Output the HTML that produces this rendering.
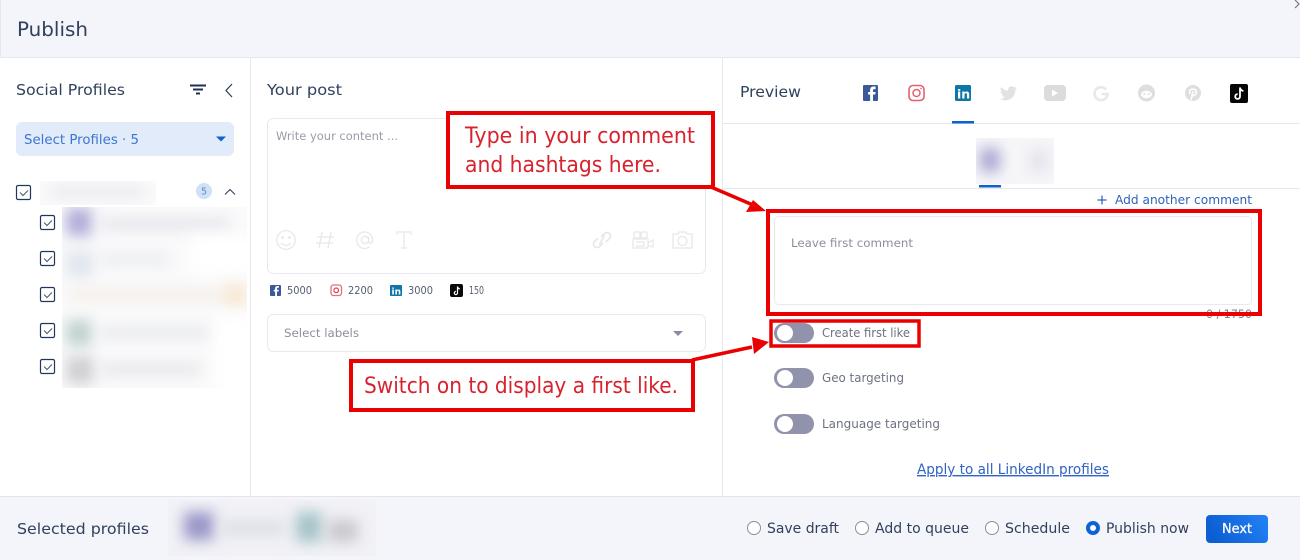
<!DOCTYPE html>
<html><head><meta charset="utf-8"><title>Publish</title>
<style>
html,body{margin:0;padding:0;background:#fff;width:1300px;height:560px;overflow:hidden}
svg{display:block}
text{font-family:"DejaVu Sans","Liberation Sans",sans-serif;fill:#31415c}
.r{font-family:"DejaVu Sans","Liberation Sans",sans-serif;fill:#d8232e;font-size:22px}
.g{fill:none;stroke:#e6e7eb;stroke-width:1.2}
</style></head><body>
<svg width="1300" height="560" viewBox="0 0 1300 560" xmlns="http://www.w3.org/2000/svg">
<defs>
<filter id="b" x="-150%" y="-150%" width="400%" height="400%"><feGaussianBlur stdDeviation="7"/></filter>
<clipPath id="c1"><rect x="62" y="207" width="185" height="181"/></clipPath>
<clipPath id="c2"><rect x="40" y="181" width="116" height="24"/></clipPath>
<clipPath id="c3"><rect x="976" y="138" width="78" height="46"/></clipPath>
<clipPath id="c4"><rect x="168" y="500" width="208" height="56"/></clipPath>
<linearGradient id="nx" x1="0" x2="1" y1="0.3" y2="0"><stop offset="0" stop-color="#0c5fd2"/><stop offset="1" stop-color="#2482f7"/></linearGradient>
</defs>
<rect width="1300" height="560" fill="#fff"/>
<!-- header -->
<rect width="1300" height="57" fill="#f4f5fa"/>
<rect y="57" width="1300" height="1" fill="#e6e7ee"/>
<rect width="1" height="57" fill="#e6e7ee"/>
<text x="17" y="36" font-size="19.500" textLength="71" lengthAdjust="spacingAndGlyphs">Publish</text>
<path d="M1295 0l4 4-4 4" fill="none" stroke="#777" stroke-width="1.2"/>
<!-- columns -->
<rect x="250" y="58" width="1" height="438" fill="#e9eaf0"/>
<rect x="722" y="58" width="1" height="438" fill="#e9eaf0"/>
<rect x="723" y="123" width="577" height="1" fill="#e6e7ee"/>
<rect x="723" y="188" width="577" height="1" fill="#e6e7ee"/>
<!-- sidebar -->
<text x="16" y="95" font-size="15.500" textLength="109" lengthAdjust="spacingAndGlyphs">Social Profiles</text>
<path d="M190 85.500h16M193 89.500h10M196 93.500h4" stroke="#1f3050" stroke-width="2" fill="none"/>
<path d="M232 84l-6 6.500 6 6.500" stroke="#2a3a55" stroke-width="1.2" fill="none"/>
<rect x="16" y="122" width="218" height="34" rx="6" fill="#e1ebf9"/>
<text x="24" y="144" font-size="13.500" textLength="115" lengthAdjust="spacingAndGlyphs" style="fill:#3a76d2">Select Profiles · 5</text>
<path d="M216 136.500h10l-5 5z" fill="#0d62d6"/>
<g clip-path="url(#c2)"><rect x="40" y="181" width="116" height="24" fill="#fafafb"/><rect x="50" y="186" width="95" height="12" fill="#e9eaed" filter="url(#b)"/></g>
<g clip-path="url(#c1)">
<rect x="62" y="207" width="185" height="181" fill="#fafafb"/>
<rect x="66" y="208" width="26" height="28" fill="#b0aed8" filter="url(#b)"/>
<rect x="100" y="217" width="130" height="14" fill="#e8e8ee" filter="url(#b)"/>
<rect x="66" y="250" width="28" height="28" fill="#e2e6ee" filter="url(#b)"/>
<rect x="100" y="252" width="70" height="14" fill="#eceef2" filter="url(#b)"/>
<rect x="190" y="235" width="70" height="40" fill="#fff" filter="url(#b)"/>
<rect x="70" y="288" width="170" height="14" fill="#f5f0ea" filter="url(#b)"/>
<rect x="226" y="284" width="20" height="22" fill="#fbe8d2" filter="url(#b)"/>
<rect x="66" y="320" width="26" height="26" fill="#c0d2cf" filter="url(#b)"/>
<rect x="100" y="326" width="110" height="14" fill="#eaebee" filter="url(#b)"/>
<rect x="215" y="315" width="40" height="80" fill="#fff" filter="url(#b)"/>
<rect x="66" y="356" width="28" height="28" fill="#d0d0d3" filter="url(#b)"/>
<rect x="100" y="362" width="100" height="14" fill="#e9e9ec" filter="url(#b)"/>
</g>
<g fill="#fff" stroke="#21375a" stroke-width="1.2">
<rect x="16.500" y="185.500" width="14" height="14" rx="1.500"/>
<rect x="40.500" y="215.500" width="14" height="14" rx="1.500"/>
<rect x="40.500" y="251.500" width="14" height="14" rx="1.500"/>
<rect x="40.500" y="287.500" width="14" height="14" rx="1.500"/>
<rect x="40.500" y="323.500" width="14" height="14" rx="1.500"/>
<rect x="40.500" y="359.500" width="14" height="14" rx="1.500"/>
</g>
<g fill="none" stroke="#5a6478" stroke-width="1.200">
<path d="M20 192.500l3 3 5-5"/><path d="M44 222.500l3 3 5-5"/><path d="M44 258.500l3 3 5-5"/><path d="M44 294.500l3 3 5-5"/><path d="M44 330.500l3 3 5-5"/><path d="M44 366.500l3 3 5-5"/>
</g>
<circle cx="204" cy="191" r="8" fill="#cfe0f7"/>
<text x="204" y="194.500" font-size="9.500" text-anchor="middle" style="fill:#5f8bd2">5</text>
<path d="M225 194.500l5-5 5 5" fill="none" stroke="#2a3a55" stroke-width="1"/>
<!-- your post -->
<text x="267" y="95" font-size="15.500" textLength="75" lengthAdjust="spacingAndGlyphs">Your post</text>
<rect x="267.500" y="118.500" width="438" height="155" rx="6" fill="#fff" stroke="#e8e9ef"/>
<text x="276" y="140" font-size="11.500" textLength="122" lengthAdjust="spacingAndGlyphs" style="fill:#9a9ca6">Write your content ...</text>
<g class="g">
<circle cx="286" cy="240" r="9.300"/><circle cx="282.500" cy="237.500" r=".8"/><circle cx="289.500" cy="237.500" r=".8"/><path d="M281 243c2.500 3 7.500 3 10 0"/>
<path d="M322 232l-3 16M331 232l-3 16M317 237h17M316 243h17"/>
<circle cx="365" cy="240" r="3.600"/><path d="M368.600 236.500v5c0 2.500 4 2.500 4-1 0-5-3.500-8.500-8-8.500s-8 3.600-8 8.300 3.600 8.200 8 8.200c2 0 3.500-.5 5-1.500"/>
<path d="M397 235v-3h14v3M404 232v16M401 248h6"/>
<path d="M598 238l-3.500 3.500a3.500 3.500 0 0 0 5 5l3.500-3.500M606 242l3.500-3.500a3.500 3.500 0 0 0-5-5L601 237M599.500 244.500l5-9" stroke-width="1.600"/>
<rect x="633" y="239" width="15" height="9"/><rect x="634" y="232" width="6" height="6" rx="1"/><rect x="641" y="232" width="6" height="6" rx="1"/><path d="M648 243l5-3v7l-5-2M636 242h8v4h-8"/>
<path d="M673 234h5l1-2h7l1 2h5v14h-19z"/><circle cx="682.500" cy="241" r="4.500"/>
</g>
<!-- counters -->
<rect x="270" y="285" width="11" height="11" rx="1" fill="#3b5998"/><path d="M277 296v-4.500h1.500l.3-1.800h-1.800v-1c0-.6.300-.9 1-.9h.9V286h-1.500c-1.500 0-2.300.9-2.300 2.300v1.400h-1.300v1.800h1.300V296z" fill="#fff"/>
<text x="287" y="294" font-size="10.500" textLength="25" lengthAdjust="spacingAndGlyphs" style="fill:#555e70">5000</text>
<rect x="331" y="285" width="10.500" height="10.500" rx="2.500" fill="none" stroke="#e2707e" stroke-width="1.300"/><circle cx="336.200" cy="290.300" r="2.300" fill="none" stroke="#d8404f" stroke-width="1.200"/>
<text x="348" y="294" font-size="10.500" textLength="25" lengthAdjust="spacingAndGlyphs" style="fill:#555e70">2200</text>
<rect x="390" y="285" width="12" height="11" rx="1" fill="#0e76a8"/><text x="391.500" y="294.500" font-size="9" font-weight="bold" style="fill:#fff">in</text>
<text x="408" y="294" font-size="10.500" textLength="25" lengthAdjust="spacingAndGlyphs" style="fill:#555e70">3000</text>
<rect x="450" y="284" width="13" height="13" rx="2" fill="#0a0a0a"/><path d="M457.500 286.500v6.500a1.600 1.600 0 1 1-1.600-1.600M457.500 286.500c.2 1.500 1 2.200 2.300 2.400" fill="none" stroke="#fff" stroke-width="1.200"/>
<text x="469" y="294" font-size="10.500" textLength="15" lengthAdjust="spacingAndGlyphs" style="fill:#555e70">150</text>
<!-- labels -->
<rect x="267.500" y="314.500" width="438" height="37" rx="6" fill="#fff" stroke="#e8e9ef"/>
<text x="284" y="337" font-size="11.500" textLength="75" lengthAdjust="spacingAndGlyphs" style="fill:#8d8f9b">Select labels</text>
<path d="M673 331h10l-5 5z" fill="#8a8ba3"/>
<!-- preview -->
<text x="740" y="97" font-size="15" textLength="61" lengthAdjust="spacingAndGlyphs">Preview</text>
<rect x="863" y="85" width="15" height="16" rx="1" fill="#3b5998"/><path d="M873 101v-6.500h2.200l.4-2.500H873v-1.600c0-.8.300-1.300 1.300-1.300h1.300V86.500h-2c-2.200 0-3.500 1.300-3.500 3.400V92h-2v2.500h2v6.500z" fill="#fff"/>
<rect x="909" y="85.500" width="15" height="15" rx="4" fill="none" stroke="#e5606e" stroke-width="1.600"/><circle cx="916.500" cy="93" r="3.500" fill="none" stroke="#e5606e" stroke-width="1.500"/><circle cx="921" cy="88.500" r=".8" fill="#e5606e"/>
<rect x="955" y="85" width="16" height="16" rx="1.500" fill="#0e76a8"/><text x="957" y="98.500" font-size="12.500" font-weight="bold" style="fill:#fff">in</text>
<rect x="952" y="121" width="22" height="2.500" fill="#0d62d0"/>
<path d="M1017 88c-.7.300-1.300.5-2 .6.700-.5 1.300-1.100 1.500-1.900-.7.400-1.400.7-2.200.8a3.500 3.500 0 0 0-6 3.200c-3-.1-5.500-1.500-7.200-3.700-.9 1.600-.5 3.700 1.100 4.700-.6 0-1.100-.2-1.600-.4 0 1.700 1.200 3.100 2.800 3.500-.5.100-1 .2-1.600.1.500 1.400 1.800 2.400 3.300 2.400-1.500 1.200-3.400 1.700-5.200 1.500 1.600 1 3.400 1.600 5.400 1.600 6.500 0 10.200-5.500 10-10.400.7-.5 1.300-1.200 1.700-2z" fill="#e2e2e2"/>
<rect x="1044" y="85" width="22" height="16" rx="4" fill="#dcdcdc"/><path d="M1052 89.500v7l6-3.500z" fill="#fff"/>
<path d="M1106 89.500a6.500 6.500 0 1 0 1.500 4.500h-6" fill="none" stroke="#e8e8e8" stroke-width="2.600"/>
<circle cx="1146.500" cy="93" r="8.500" fill="#dedede"/><ellipse cx="1146.500" cy="94.500" rx="5.500" ry="3.800" fill="#fff"/><circle cx="1144.300" cy="94" r="1" fill="#dedede"/><circle cx="1148.700" cy="94" r="1" fill="#dedede"/>
<circle cx="1193" cy="93" r="8" fill="#dedede"/><path d="M1191 100l2-9M1190 94c-1.500-3 .5-5 3-5s4 2 3 4.500-3.500 2.500-4 1" fill="none" stroke="#fff" stroke-width="1.600"/>
<rect x="1230" y="84" width="18" height="19" rx="2" fill="#050505"/><path d="M1240 87.500v9a2.400 2.400 0 1 1-2.400-2.400M1240 87.500c.3 2 1.500 3.200 3.400 3.500" fill="none" stroke="#fff" stroke-width="1.800"/>
<!-- thumb -->
<g clip-path="url(#c3)">
<rect x="976" y="138" width="78" height="46" fill="#f6f6f9"/>
<rect x="980" y="148" width="20" height="24" fill="#a9a7d2" filter="url(#b)"/>
<rect x="1030" y="150" width="18" height="22" fill="#e2e2ea" filter="url(#b)"/>
</g>
<rect x="979" y="185" width="22" height="2.500" fill="#0d62d0"/>
<!-- add comment -->
<path d="M1102 195.500v9M1097.500 200h9" stroke="#2a62b8" stroke-width="1.200"/>
<text x="1115" y="204" font-size="12" textLength="137" lengthAdjust="spacingAndGlyphs" style="fill:#2e63b8">Add another comment</text>
<rect x="774.500" y="216.500" width="477" height="88" rx="4" fill="#fff" stroke="#e8e9f0"/>
<text x="791" y="247" font-size="11.500" textLength="122" lengthAdjust="spacingAndGlyphs" style="fill:#8d8f9b">Leave first comment</text>
<text x="1206" y="318" font-size="11.500" textLength="46" lengthAdjust="spacingAndGlyphs" style="fill:#7d808c">0 / 1750</text>
<!-- toggles -->
<g fill="#9192ac"><rect x="774" y="323" width="40" height="20" rx="10"/><rect x="774" y="368" width="40" height="20" rx="10"/><rect x="774" y="414" width="40" height="20" rx="10"/></g>
<g fill="#fff"><circle cx="785" cy="333" r="8"/><circle cx="785" cy="378" r="8"/><circle cx="785" cy="424" r="8"/></g>
<text x="822" y="337" font-size="12" textLength="88" lengthAdjust="spacingAndGlyphs" style="fill:#6d7282">Create first like</text>
<text x="822" y="382" font-size="12" textLength="82" lengthAdjust="spacingAndGlyphs" style="fill:#6d7282">Geo targeting</text>
<text x="822" y="428" font-size="12" textLength="118" lengthAdjust="spacingAndGlyphs" style="fill:#6d7282">Language targeting</text>
<text x="917" y="474" font-size="14" textLength="192" lengthAdjust="spacingAndGlyphs" text-decoration="underline" style="fill:#2f63c4">Apply to all LinkedIn profiles</text>
<!-- footer -->
<rect y="496" width="1300" height="64" fill="#f4f5fa"/>
<rect y="496" width="1300" height="1" fill="#e4e5ec"/>
<text x="17" y="534" font-size="15" textLength="132" lengthAdjust="spacingAndGlyphs">Selected profiles</text>
<g clip-path="url(#c4)">
<rect x="168" y="500" width="208" height="56" fill="#f1f1f6"/>
<rect x="184" y="512" width="30" height="28" fill="#9a97c8" filter="url(#b)"/>
<rect x="220" y="520" width="65" height="16" fill="#dfe1e8" filter="url(#b)"/>
<rect x="296" y="512" width="26" height="30" fill="#a6c4c8" filter="url(#b)"/>
<rect x="328" y="520" width="30" height="22" fill="#c8c8cd" filter="url(#b)"/>
</g>
<g fill="#fff" stroke="#8a8e9c" stroke-width="1"><circle cx="754" cy="528" r="6.500"/><circle cx="862" cy="528" r="6.500"/><circle cx="992" cy="528" r="6.500"/></g>
<circle cx="1093" cy="528" r="5" fill="#fff" stroke="#0d62d6" stroke-width="4"/>
<text x="767" y="533" font-size="14" textLength="72" lengthAdjust="spacingAndGlyphs">Save draft</text>
<text x="875" y="533" font-size="14" textLength="94" lengthAdjust="spacingAndGlyphs">Add to queue</text>
<text x="1005" y="533" font-size="14" textLength="65" lengthAdjust="spacingAndGlyphs">Schedule</text>
<text x="1106" y="533" font-size="14" textLength="83" lengthAdjust="spacingAndGlyphs">Publish now</text>
<rect x="1206" y="515" width="62" height="28" rx="4" fill="url(#nx)"/>
<text x="1222" y="533" font-size="13.500" textLength="30" lengthAdjust="spacingAndGlyphs" stroke="#fff" stroke-width=".3" style="fill:#fff">Next</text>
<!-- annotations -->
<g fill="none" stroke="#ea0000">
<rect x="448" y="113" width="265" height="74" fill="#fff" stroke-width="4"/>
<rect x="768" y="211" width="492" height="103" stroke-width="4"/>
<rect x="771" y="321" width="148" height="25" stroke-width="3.500"/>
<rect x="351" y="361" width="342" height="49" fill="#fff" stroke-width="4"/>
<path d="M711 187l42 18" stroke-width="3.500"/>
<path d="M692 360l60-13" stroke-width="3.500"/>
</g>
<path d="M766 211l-20 1 7-12z" fill="#ea0000"/>
<path d="M769 342l-17-5 2 17z" fill="#ea0000"/>
<text class="r" x="465" y="143" textLength="230" lengthAdjust="spacingAndGlyphs" style="fill:#d8232e">Type in your comment</text>
<text class="r" x="465" y="172" textLength="196" lengthAdjust="spacingAndGlyphs" style="fill:#d8232e">and hashtags here.</text>
<text class="r" x="364" y="393" textLength="314" lengthAdjust="spacingAndGlyphs" style="fill:#d8232e">Switch on to display a first like.</text>
</svg>
</body></html>
